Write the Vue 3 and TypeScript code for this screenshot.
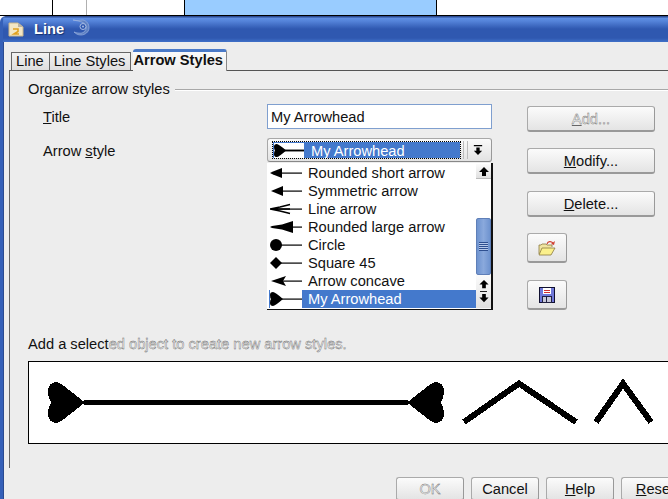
<template>
  <div class="screen">
    <div class="behind">
      <div class="cell first"></div>
      <div class="cell second"></div>
      <div class="cell third"></div>
      <div class="cell picked"></div>
      <div class="cell rest"></div>
    </div>

    <div class="dialog">
      <div class="titlebar">
        <svg class="app-icon" width="16" height="16" viewBox="0 0 16 16">
          <path d="M1 2h9l5 4v9H1z" fill="#f3e6c4" stroke="#c9b68a" />
          <path d="M10 2v4h5z" fill="#b9b2a4" />
          <path d="M5 8h5v2.5L6 13h5" fill="none" stroke="#e0a020" stroke-width="1.6" />
        </svg>
        <span class="title-text">Line</span>
        <svg class="swirl" width="18" height="18" viewBox="0 0 18 18">
          <path d="M1 1c5 1 7 0 10 0 4 1 6 4 6 8 0 4-4 7-8 7-3 0-5-1-7-3 3 1 7 2 10 0 2-2 3-5 1-8-2-2-6-3-12-4z" fill="#5f82c4" stroke="#a8bce4" stroke-width=".6" />
          <circle cx="11" cy="7.500" r="3" fill="#2f58b0" stroke="#a8bce4" />
          <circle cx="11" cy="7.500" r="1" fill="#a8bce4" />
        </svg>
      </div>

      <div class="tabs">
        <div v-for="tab in tabs" :key="tab" class="tab" :class="{ active: tab === 'Arrow Styles' }">{{ tab }}</div>
      </div>

      <div class="pane">
        <div class="group-title">
          <span>Organize arrow styles</span>
          <div class="group-line"></div>
        </div>

        <div class="organize">
          <div class="fields">
            <div class="field-row">
              <label class="field-label"><u>T</u>itle</label>
              <div class="text-input">My Arrowhead</div>
            </div>
            <div class="field-row combo-row">
              <label class="field-label">Arrow <u>s</u>tyle</label>
              <div class="combo">
                <div class="combo-value">
                  <svg class="swatch" width="32" height="15" viewBox="0 1 32 16">
                    <rect y="1" width="32" height="16" fill="#fff" />
                    <path :d="heartPath" />
                    <rect x="10" y="8" width="22" height="2" />
                  </svg>
                  <span class="combo-text">My Arrowhead</span>
                </div>
                <div class="combo-grip"></div>
                <svg class="combo-arrow" width="10" height="14" viewBox="0 0 12 14">
                  <path d="M1 1h10v1.5H1zM4 4h4v4h3l-5 5-5-5h3z" />
                </svg>

                <div class="dropdown">
                  <div class="rows">
                    <div v-for="item in arrowStyles" :key="item.name" class="row" :class="{ selected: item.selected }">
                      <svg class="swatch" width="32" height="18" viewBox="0 0 32 18">
                        <rect v-if="item.selected" width="32" height="18" fill="#fff" />
                        <path :d="item.head" :fill="item.open ? 'none' : '#000'" :stroke="item.open ? '#000' : 'none'" stroke-width="1.5" />
                        <rect x="8" y="8.500" width="24" height="1.200" />
                      </svg>
                      <span>{{ item.name }}</span>
                    </div>
                  </div>
                  <div class="scrollbar">
                    <div class="scroll-btn">
                      <svg width="10" height="10" viewBox="0 0 10 10"><path d="M5 1l5 5H7v4H3V6H0z" /></svg>
                    </div>
                    <div class="scroll-track"></div>
                    <div class="scroll-thumb"><div class="thumb-grip"></div></div>
                    <div class="scroll-btn double">
                      <svg width="10" height="12" viewBox="0 0 10 12"><path d="M5 1l5 5H7v4H3V6H0z" /></svg>
                      <div class="scroll-sep"></div>
                      <svg width="10" height="12" viewBox="0 0 10 12"><path d="M3 1h4v4h3l-5 5-5-5h3z" /></svg>
                    </div>
                  </div>
                </div>
              </div>
            </div>
          </div>

          <div class="actions">
            <button class="btn wide ghost"><u>A</u>dd...</button>
            <button class="btn wide"><u>M</u>odify...</button>
            <button class="btn wide"><u>D</u>elete...</button>
            <button class="btn icon">
              <svg width="18" height="16" viewBox="0 0 18 16">
                <path d="M1 14V5h2l1-1h4l1 1h5v2" fill="#f0e4a0" stroke="#8a7a40" stroke-width=".8" />
                <path d="M1 15l3-7h13l-4 7z" fill="#fbf08c" stroke="#8a7a40" stroke-width=".8" />
                <path d="M9 4c1-3 4-3 6-1" fill="none" stroke="#d04030" stroke-width="1.100" />
                <path d="M17 1l-1 4-3-1z" fill="#d04030" />
              </svg>
            </button>
            <button class="btn icon">
              <svg width="16" height="16" viewBox="0 0 16 16">
                <rect x=".5" y=".5" width="15" height="15" fill="#7078d8" stroke="#101030" />
                <rect x="4" y="1" width="8" height="6" fill="#fff" />
                <path d="M5 3h6v1H5zM5 5h6v1H5z" fill="#d03030" />
                <rect x="3.500" y="9.500" width="9" height="6" fill="#c8c8d8" stroke="#202040" />
                <rect x="7" y="10" width="1" height="5" fill="#202040" />
              </svg>
            </button>
          </div>
        </div>

        <p class="hint">Add a select<span class="ghost">ed object to create new arrow styles.</span></p>

        <div class="preview">
          <svg width="660" height="81" viewBox="29 362 660 81" shape-rendering="crispEdges">
            <path d="M85 402.500L64 386C60 383 58 382 56 382C51 382 48 386 48 391C48 396 49 400 51 402.500C49 405 48 409 48 414C48 419 51 423 56 423C58 423 60 422 64 419Z" />
            <rect x="84" y="400" width="324" height="5" />
            <path d="M407 402.500L428 386C432 383 434 382 436 382C441 382 444 386 444 391C444 396 443 400 441 402.500C443 405 444 409 444 414C444 419 441 423 436 423C434 423 432 422 428 419Z" />
            <path d="M464 422L519 383.500L576 422" fill="none" stroke="#000" stroke-width="6" />
            <path d="M596 422L623 383.500L651 422" fill="none" stroke="#000" stroke-width="6" />
          </svg>
        </div>
      </div>

      <div class="footer">
        <button class="btn foot ghost">OK</button>
        <button class="btn foot">Cancel</button>
        <button class="btn foot"><u>H</u>elp</button>
        <button class="btn foot"><u>R</u>eset</button>
      </div>
    </div>
  </div>
</template>

<script setup lang="ts">
interface ArrowStyle {
  name: string
  head: string
  open?: boolean
  selected?: boolean
}

const tabs: string[] = ['Line', 'Line Styles', 'Arrow Styles']

const heartPath = 'M3 2Q0 2 0 5Q0 8 1 9Q0 10 0 13Q0 16 3 16Q5 16 13 9Q5 2 3 2Z'

const arrowStyles: ArrowStyle[] = [
  { name: 'Rounded short arrow', head: 'M0 9L3 7.500L12 4V14L3 10.500Z' },
  { name: 'Symmetric arrow', head: 'M1 9L13 4V14Z' },
  { name: 'Line arrow', head: 'M0 9L10 7L20 4.500M0 9H20M0 9L10 11L20 13.500', open: true },
  { name: 'Rounded large arrow', head: 'M0 9L2 8L12 6.500L23 3V15L12 11.500L2 10Z' },
  { name: 'Circle', head: 'M0 9A6 6 0 1 1 12 9A6 6 0 1 1 0 9Z' },
  { name: 'Square 45', head: 'M0 9L6 3L12 9L6 15Z' },
  { name: 'Arrow concave', head: 'M1 9L16 4L13 9L16 14Z' },
  { name: 'My Arrowhead', head: heartPath, selected: true }
]
</script>

<style scoped>
.screen {
  width: 668px;
  height: 499px;
  overflow: hidden;
  font-family: "Liberation Sans", Arial, sans-serif;
  font-size: 14.67px;
  color: #111;
  background: #fff;
}

.behind {
  display: flex;
  height: 16px;
  box-sizing: border-box;
  border-bottom: 1px solid #000;
  background: #fff;
}

.cell { box-sizing: border-box; }
.cell.first { width: 52px; }
.cell.second { width: 34px; border-left: 1px solid #000; }
.cell.third { width: 98px; border-left: 1px solid #b0b0b0; }
.cell.picked { width: 252px; border-left: 1px solid #000; background: #99ccff; }
.cell.rest { flex: 1; border-left: 1px solid #000; }

.dialog {
  width: 720px;
  height: 483px;
  overflow: hidden;
  border-radius: 6px 0 0 0;
  border-left: 3px solid #3560b8;
  box-sizing: border-box;
  background: #ededed;
  box-shadow: inset 1px 0 0 #2a4a90;
}

.titlebar {
  display: flex;
  align-items: center;
  height: 26px;
  margin-left: -3px;
  padding-left: 8px;
  box-sizing: border-box;
  background: linear-gradient(#2c4c94 0, #2c4c94 1px, #5f8fe4 2px, #5584da 5px, #2f58b0 13px, #2f58b0 22px, #4070c8 26px);
}

.app-icon { flex: none; }

.title-text {
  margin-left: 10px;
  color: #fff;
  font-weight: bold;
  text-shadow: 1px 1px 1px #14306e;
}

.swirl { flex: none; margin-left: 8px; margin-top: -3px; }

.tabs {
  display: flex;
  align-items: flex-end;
  height: 21px;
  margin-top: 7px;
  padding-left: 8px;
}

.tab {
  height: 18px;
  padding: 0 5px 0 4px;
  box-sizing: border-box;
  border: 1px solid #666;
  border-bottom: 0;
  margin-right: -1px;
  line-height: 17px;
  background: linear-gradient(#f2f2f2, #dedede);
}

.tab.active {
  position: relative;
  z-index: 1;
  height: 22px;
  margin-bottom: -1px;
  margin-left: 3px;
  padding: 0 3px 0 0;
  border: 0;
  border-top: 3px solid #4a7ac8;
  border-right: 1px solid #888;
  border-radius: 3px 3px 0 0;
  line-height: 17px;
  font-weight: bold;
  background: linear-gradient(#fafafa, #ededed);
}

.pane {
  height: 398px;
  margin-left: 6px;
  padding: 10px 0 0 18px;
  box-sizing: border-box;
  border-top: 1px solid #555;
  border-left: 1px solid #666;
}

.group-title {
  display: flex;
  align-items: center;
  gap: 5px;
  height: 17px;
  line-height: 17px;
}

.group-line {
  flex: 1;
  height: 1px;
  margin-top: -1px;
  background: #a8a8a8;
  box-shadow: 0 1px 0 #fff;
}

.organize {
  display: flex;
  align-items: flex-start;
  height: 212px;
}

.fields {
  width: 499px;
  flex: none;
  padding: 6px 0 0 15px;
  box-sizing: border-box;
}

.field-row {
  display: flex;
  align-items: center;
  height: 25px;
}

.combo-row {
  height: 24px;
  margin-top: 9px;
}

.combo-row .field-label { padding-top: 1px; }

.field-label { width: 224px; flex: none; }

.text-input {
  width: 225px;
  height: 25px;
  padding-left: 3px;
  box-sizing: border-box;
  border: 1px solid #7f9fcf;
  line-height: 24px;
  background: #fff;
}

.combo {
  position: relative;
  display: flex;
  align-items: center;
  width: 225px;
  height: 24px;
  box-sizing: border-box;
  border: 1px solid #a8a8a8;
  border-right-color: #999;
  border-bottom-color: #888;
  border-radius: 3px;
  background: linear-gradient(#fafafa, #e2e2e2);
}

.combo-value {
  display: flex;
  align-items: center;
  gap: 6px;
  width: 187px;
  height: 16px;
  margin-left: 5px;
  flex: none;
  outline: 1px dotted #000;
  color: #fff;
  background: #4479cc;
}

.combo-text { padding-top: 1px; }

.combo-grip {
  width: 3px;
  height: 18px;
  flex: none;
  margin: 0 5px 0 3px;
  border-left: 1px solid #bbb;
  border-right: 1px solid #bbb;
}

.combo-arrow { flex: none; }

.dropdown {
  position: absolute;
  top: 24px;
  left: -1px;
  z-index: 2;
  display: flex;
  width: 226px;
  height: 147px;
  padding: 1px 0 0 2px;
  box-sizing: border-box;
  border-right: 2px solid #111;
  border-bottom: 1px solid #111;
  background: #fff;
}

.rows { width: 207px; flex: none; }

.row {
  display: flex;
  align-items: center;
  gap: 6px;
  height: 18px;
  padding-left: 1px;
  color: #111;
}

.row.selected {
  color: #fff;
  background: #4479cc;
}

.swatch { flex: none; }

.scrollbar {
  display: flex;
  flex-direction: column;
  width: 15px;
  background: #f8f8f8;
}

.scroll-btn {
  display: flex;
  align-items: center;
  justify-content: center;
  height: 14px;
  background: linear-gradient(#fbfbfb, #e0e0e0);
  border-bottom: 1px solid #bbb;
}

.scroll-btn.double {
  flex-direction: column;
  height: 33px;
  border-bottom: 0;
}

.scroll-btn.double svg { height: 11px; }

.scroll-sep {
  width: 7px;
  height: 1px;
  background: #222;
  margin: 1px 0;
}

.scroll-track { height: 39px; background: #fff; }

.scroll-thumb {
  display: flex;
  align-items: center;
  justify-content: center;
  height: 57px;
  box-sizing: border-box;
  border: 1px solid #5f7fb8;
  border-radius: 2px;
  background: linear-gradient(90deg, #6e93cf, #8aa9dc 50%, #6e93cf);
}

.thumb-grip {
  width: 9px;
  height: 9px;
  background: repeating-linear-gradient(#2e4f90 0, #2e4f90 1px, #b7c9ea 1px, #b7c9ea 2px);
}

.actions {
  display: flex;
  flex-direction: column;
  align-items: flex-start;
  padding-top: 8px;
  gap: 16px;
}

.actions .btn:nth-child(3),
.actions .btn:nth-child(5) { margin-top: 1px; }

.btn {
  font: inherit;
  color: #111;
  padding: 0;
  box-sizing: border-box;
  border: 1px solid #aaa;
  border-right-color: #999;
  border-bottom: 2px solid #999;
  border-radius: 3px;
  background: linear-gradient(#fbfbfb, #e4e4e4);
  display: flex;
  align-items: center;
  justify-content: center;
}

.btn.wide { width: 128px; height: 26px; }
.btn.icon { width: 40px; height: 30px; }
.btn.foot { width: 68px; height: 24px; flex: none; }

.ghost {
  color: #f6f6f6;
  -webkit-text-stroke: 0.4px #666;
}

.hint {
  margin: 26px 0 0;
  height: 17px;
  line-height: 17px;
}

.preview {
  height: 83px;
  margin-top: 8px;
  box-sizing: border-box;
  border: 1px solid #000;
  background: #fff;
}

.preview svg { display: block; }

.footer {
  display: flex;
  gap: 7px;
  padding: 9px 0 0 393px;
}
</style>

<style>
html, body {
  margin: 0;
  overflow: hidden;
}
</style>
